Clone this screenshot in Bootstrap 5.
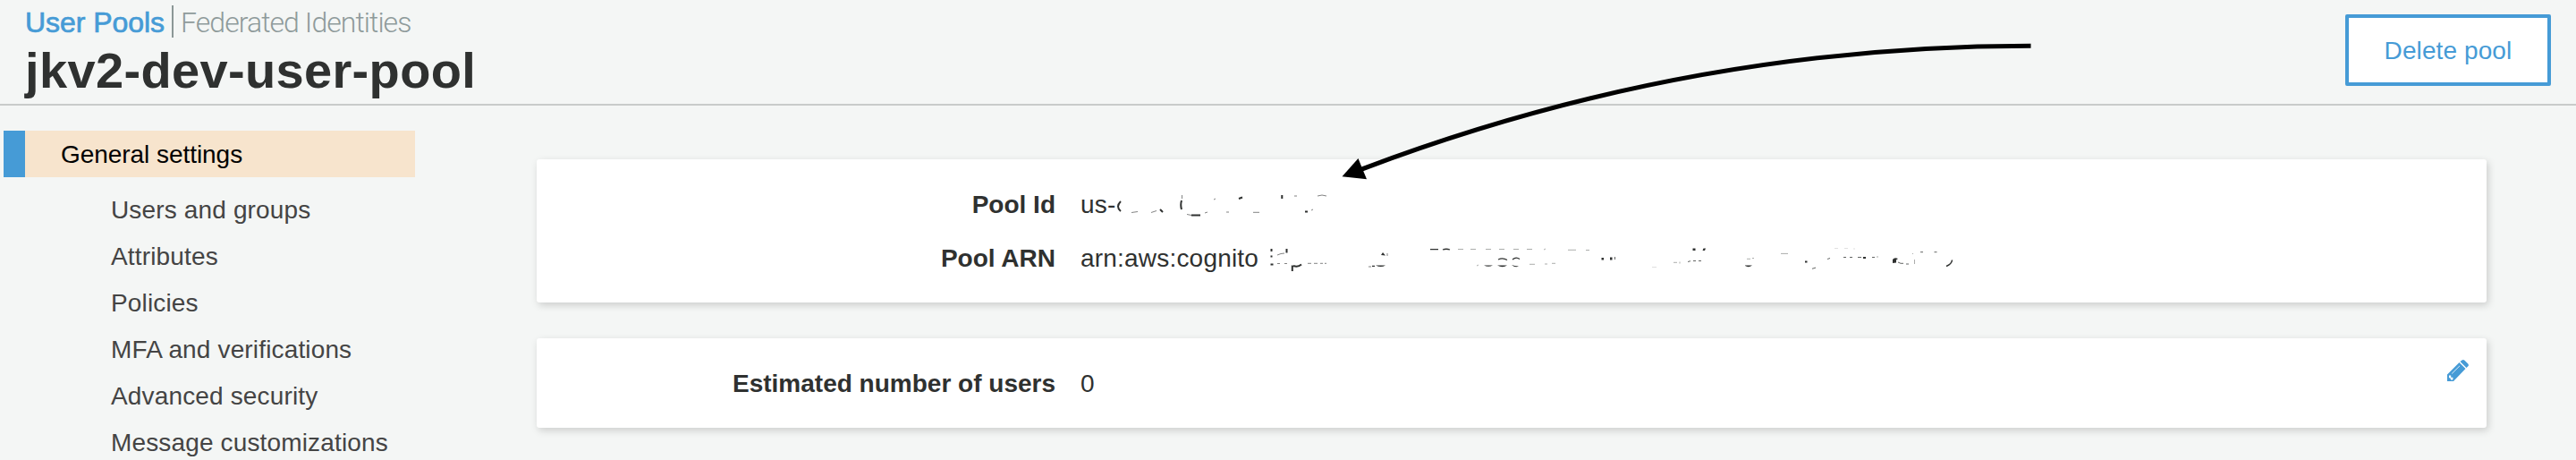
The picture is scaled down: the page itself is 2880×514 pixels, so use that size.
<!DOCTYPE html>
<html lang="en">
<head>
<meta charset="utf-8">
<title>User Pools</title>
<link href="https://cdn.jsdelivr.net/npm/bootstrap@5.3.0/dist/css/bootstrap.min.css" rel="stylesheet">
<style>
  body { background: #f4f6f5; color: #2f3130; font-family: "Liberation Sans", Arial, sans-serif; font-size: 28px; line-height: 32px; height: 514px; overflow: hidden; }
  .pool-header { height: 118px; border-bottom: 2px solid #c8cbca; padding: 7px 28px 0; }
  .pool-tabs { font-size: 32px; line-height: 36px; }
  .pool-tabs a { text-decoration: none; }
  .tab-on { color: #469bd6; -webkit-text-stroke: .7px #469bd6; letter-spacing: -.05px; }
  .tab-rule { width: 2px; height: 36px; background: #8b9796; margin: -1px 8px 1px; }
  .tab-off { color: #8f9b9b; font-family: Roboto, sans-serif; font-weight: 300; letter-spacing: -.95px; }
  .pool-title { font-size: 56px; line-height: 64px; font-weight: 700; margin: 4px 0 0; letter-spacing: .35px; }
  .btn-pool { --bs-btn-color: #469bd6; --bs-btn-bg: #fff; --bs-btn-border-color: #469bd6; --bs-btn-hover-color: #469bd6; --bs-btn-hover-border-color: #469bd6; border-width: 4px; border-radius: 2px; width: 230px; height: 80px; font-size: 28px; line-height: 32px; margin-top: 9px; padding: 2px 0 0; letter-spacing: .1px; }
  .side-menu { width: 460px; height: 368px; overflow: hidden; margin: 28px 0 0 4px; }
  .side-menu a { color: #444; text-decoration: none; flex: none; height: 52px; line-height: 54px; padding-left: 120px; letter-spacing: .15px; white-space: nowrap; }
  .side-menu a.current { color: #000; background: #f7e4cd; border-left: 24px solid #469bd6; padding-left: 40px; margin-bottom: 10px; letter-spacing: -.05px; }
  .pool-main { width: 2220px; height: 396px; overflow: hidden; margin: 0 0 0 116px; padding: 60px 20px 0; gap: 40px; }
  .panel { flex: none; width: 2180px; background: #fff; border-radius: 3px; box-shadow: 2px 3px 8px rgba(0,0,0,.17); padding: 35px 0 22px; }
  .panel.double { height: 160px; }
  .panel.single { height: 100px; }
  .field { height: 60px; line-height: 32px; }
  .field dt { width: 580px; text-align: right; font-weight: 700; }
  .field dd { margin: 0 0 0 28px; letter-spacing: .2px; }
  .edit-btn { position: absolute; right: 20px; top: 24px; line-height: 0; }
  .marks { position: absolute; left: 0; top: 0; pointer-events: none; }
</style>
</head>
<body class="position-relative">
<header class="pool-header d-flex justify-content-between align-items-start">
  <div>
    <nav class="pool-tabs d-flex"><a href="#" class="tab-on">User Pools</a><span class="tab-rule"></span><a href="#" class="tab-off">Federated Identities</a></nav>
    <h1 class="pool-title">jkv2-dev-user-pool</h1>
  </div>
  <button class="btn btn-pool" type="button">Delete pool</button>
</header>
<div class="d-flex align-items-start">
  <nav class="side-menu d-flex flex-column flex-shrink-0">
    <a class="current" href="#">General settings</a>
    <a href="#">Users and groups</a>
    <a href="#">Attributes</a>
    <a href="#">Policies</a>
    <a href="#">MFA and verifications</a>
    <a href="#">Advanced security</a>
    <a href="#">Message customizations</a>
  </nav>
  <main class="pool-main d-flex flex-column flex-shrink-0">
    <section class="panel double">
      <dl class="mb-0">
        <div class="field d-flex"><dt>Pool Id</dt><dd>us-</dd></div>
        <div class="field d-flex"><dt>Pool ARN</dt><dd>arn:aws:cognito</dd></div>
      </dl>
    </section>
    <section class="panel single position-relative">
      <dl class="mb-0"><div class="field d-flex"><dt>Estimated number of users</dt><dd>0</dd></div></dl>
      <a class="edit-btn" href="#" aria-label="Edit">
        <svg width="24" height="24" viewBox="0 0 24 24"><path fill="#469bd6" d="M0 24V16.500L13.500 3 20.500 10 7 24ZM14.500 2 16.500.5Q18 -.5 19.500.7L23.300 4.500Q24.500 6 23.300 7.300L21.500 9Z"/><path d="M5.200 15.500 14 6.800" stroke="#fff" stroke-width=".8"/><path fill="#fff" d="M2 17.500H4.200V19.800H6.400V22L5.300 22.800 3.800 22V20.800L2 20Z"/></svg>
      </a>
    </section>
  </main>
</div>
<svg class="marks" width="2880" height="514" viewBox="0 0 2880 514" fill="none">
  <!-- arrow pointing at the pool id -->
  <path d="M2270.500 51.300Q1885 51.300 1520 190" stroke="#000" stroke-width="5"/>
  <path d="M1500.500 197.300 1518.500 177 1528 200.300Z" fill="#000"/>
  <!-- leftovers of the erased values -->
  <g stroke="#2f3130" stroke-width="2">
    <path d="M1253 225Q1247 231 1253 236M1297 234l3 3M1321 224q-1.500 5 0 10M1332 240.500h10M1385 222l4-1.500M1433.300 218v4M1459 236.500h3"/>
    <path stroke-width="1" stroke-opacity=".6" d="M1265 237.500l7-1M1287 237.500l6-2M1321.500 218v4M1327 239.500l5 1M1347 238l3-1M1357 223l2-1M1371 237h3M1401 237.300h7M1447 219h3M1466 235l2-1M1473 219q5-2 10 0"/>
    <path d="M1421.500 278v3M1421.500 285.500v2M1420.500 295.500h3M1438.500 278v4.500M1444.800 296.500v6.500M1446 297q5 2 9-1.500"/>
    <path stroke-width="1" stroke-opacity=".6" d="M1428 285q4-2 8-2M1428 294.500h3M1436 294.500h3M1462 294.300h4M1469 294.300h4M1476 294.300h3M1481 294.300h2M1530 298h3M1551 283v3"/>
    <path stroke-width="1.300" d="M1534 297.300h3M1599 278.700h9M1613 279q4-1.500 8 0M1675 290q5-2.500 10 .5M1691 290q4-3.500 8-.5"/>
    <path fill="#2f3130" stroke="none" d="M1538 296.500h11q-5 3-11 0M1544 285l2-3 3 3.500zM1659 296.500h10q-5 2.500-10 0M1674 296.500h11q-5 3.500-11 0M1690 296q3 1 8 1.500-4 2-8-1.500M1951 296.500h8q-4 3-8 .5M1790.500 288h2.500v2.500h-2.500zM1800 287.500h2.500v3h-2.500zM1892.500 277.500h3v2.500h-3zM1903.500 280l1-2.500h2.500l-1 2.500zM2018 291.500h2.500v2h-2.500zM2083 287h3v2h-3zM2116 294v-4q2-3 6-1l-2 1.500v3z"/>
    <path stroke-width="1" stroke-opacity=".4" d="M1630 278.500h6M1644 278.500h6M1661 278.500h6M1676 278.500h6M1692 278.500h6M1707 278.500h6M1726 279l2-1M1753 279.300h9M1773 279.500h4M1651 297l2-1M1710 295.300h6M1727 295h3M1735 294.300h4M1871 293.300h4M1878 292.500v2M1953 289.300h4M1959 288.500h2M1991 283.400h8"/>
    <path stroke-width="1" stroke-opacity=".15" d="M1847 298.500h5M2051 277.500h4M2062 277.500h4M2072 278h2"/>
    <path stroke-width="1" stroke-opacity=".75" d="M1805.500 287v3M1887 292.500l3-.8M1893 291.500h3M1899 291.500h3M2026 300.300l4-1.200M2043 289.500l3-1M2061 287.500h3M2068 287.500h3M2077 287.500h4M2093 287.500h3M2122 293l3 1.300h3M2131 295h3M2147 281.700h3M2162.500 281.700h3"/>
    <path stroke-width="1" stroke-opacity=".4" d="M2098 287h2M2140.500 290v5M2138 283l1 1"/>
    <path stroke-width="1.500" d="M2182.500 290.500Q2182 295 2176 297.500"/>
  </g>
</svg>
<script src="https://cdn.jsdelivr.net/npm/bootstrap@5.3.0/dist/js/bootstrap.bundle.min.js"></script>
</body>
</html>
